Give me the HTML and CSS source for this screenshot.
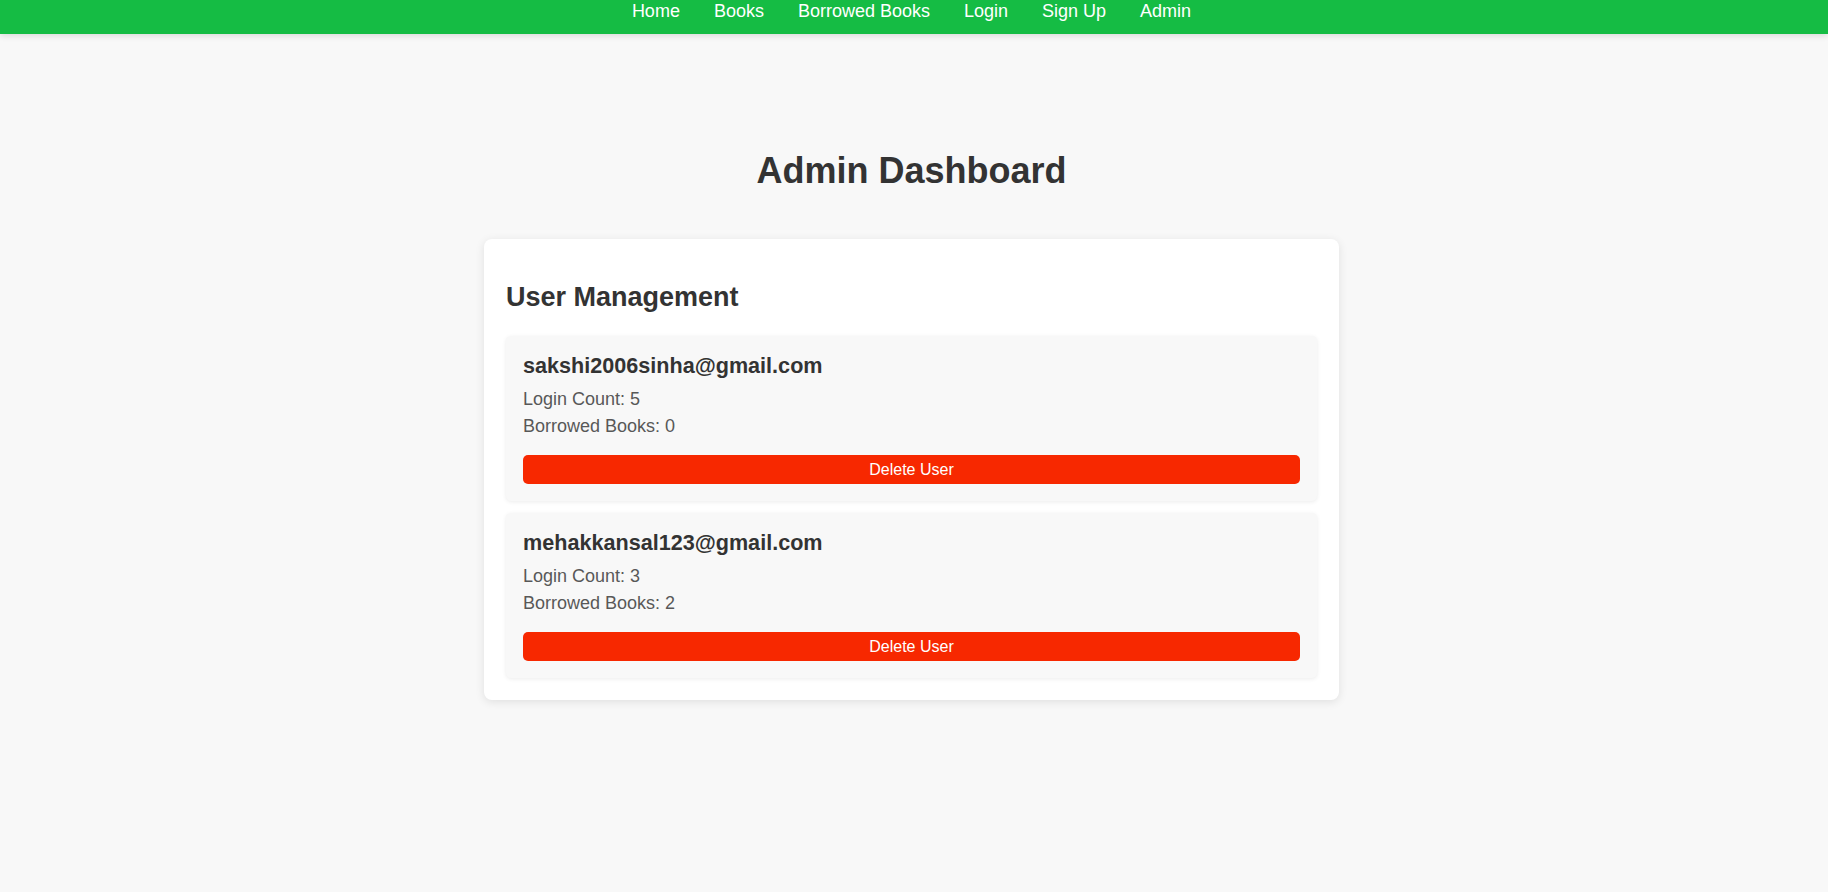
FILE: index.html
```html
<!DOCTYPE html>
<html lang="en">
<head>
<meta charset="utf-8">
<title>Admin Dashboard</title>
<link rel="stylesheet" href="styles.css">
</head>
<body>
<nav class="topnav">
  <div class="nav-links">
    <a href="#" class="nav-link">Home</a>
    <a href="#" class="nav-link">Books</a>
    <a href="#" class="nav-link">Borrowed Books</a>
    <a href="#" class="nav-link">Login</a>
    <a href="#" class="nav-link">Sign Up</a>
    <a href="#" class="nav-link">Admin</a>
  </div>
</nav>
<main class="page">
  <h1 class="page-title">Admin Dashboard</h1>
  <section class="panel">
    <h2 class="panel-title">User Management</h2>
    <div class="user-list">
      <div class="user-card">
        <h3 class="user-email">sakshi2006sinha@gmail.com</h3>
        <p class="user-stat">Login Count: 5</p>
        <p class="user-stat user-stat-last">Borrowed Books: 0</p>
        <button class="delete-btn">Delete User</button>
      </div>
      <div class="user-card">
        <h3 class="user-email">mehakkansal123@gmail.com</h3>
        <p class="user-stat">Login Count: 3</p>
        <p class="user-stat user-stat-last">Borrowed Books: 2</p>
        <button class="delete-btn">Delete User</button>
      </div>
    </div>
  </section>
</main>
</body>
</html>
```

FILE: styles.css
```css
* {
  box-sizing: border-box;
}

html, body {
  margin: 0;
  padding: 0;
}

body {
  background: #f8f8f8;
  font-family: "Liberation Sans", Arial, sans-serif;
  font-size: 18px;
  color: #333;
}

.topnav {
  background: #15bc44;
  height: 34px;
  box-shadow: 0 2px 6px rgba(0, 0, 0, 0.12);
  padding-right: 5px;
}

.nav-links {
  display: flex;
  justify-content: center;
  gap: 34px;
  padding-top: 1px;
}

.nav-link {
  color: #fff;
  text-decoration: none;
  font-size: 18px;
  line-height: 21px;
}

.page {
  display: flex;
  flex-direction: column;
  align-items: center;
  padding: 116px 5px 40px 0;
}

.page-title {
  margin: 0 0 48px;
  font-size: 36px;
  line-height: 41px;
  font-weight: bold;
  color: #333;
}

.panel {
  width: 855px;
  background: #fff;
  border-radius: 8px;
  box-shadow: 0 2px 10px rgba(0, 0, 0, 0.1);
  padding: 22px;
}

.panel-title {
  margin: 21px 0 23px;
  font-size: 27px;
  line-height: 31px;
  font-weight: bold;
  color: #333;
}

.user-list {
  display: flex;
  flex-direction: column;
  gap: 12px;
}

.user-card {
  display: flex;
  flex-direction: column;
  background: #f8f8f8;
  border-radius: 5px;
  box-shadow: 0 1px 4px rgba(0, 0, 0, 0.08);
  padding: 17px;
}

.user-email {
  margin: 0 0 11px;
  font-size: 21.6px;
  line-height: 25px;
  font-weight: bold;
  color: #333;
}

.user-stat {
  margin: 0 0 6px;
  font-size: 18px;
  line-height: 21px;
  color: #585858;
}

.user-stat-last {
  margin-bottom: 18px;
}

.delete-btn {
  display: block;
  width: 100%;
  height: 29px;
  border: none;
  border-radius: 5px;
  background: #f72800;
  color: #fff;
  font-family: "Liberation Sans", Arial, sans-serif;
  font-size: 16px;
  line-height: 18px;
  padding: 5px 10px;
  cursor: pointer;
}
```
